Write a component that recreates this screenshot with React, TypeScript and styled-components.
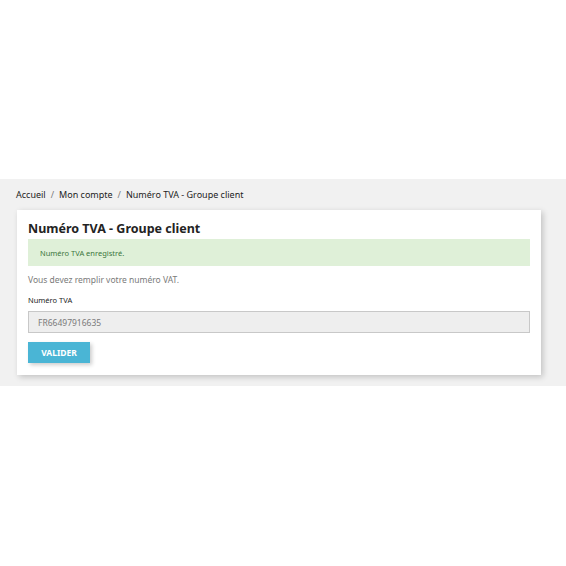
import styled, { createGlobalStyle } from "styled-components";

const GlobalStyle = createGlobalStyle`
  body {
    margin: 0;
    background: #fff;
    font-family: "Noto Sans", "Open Sans", sans-serif;
  }
`;

const HeaderSpace = styled.div`
  height: 179px;
`;

const Wrapper = styled.section`
  background: #f1f1f1;
  padding: 0 25px 11px 17px;
`;

const Breadcrumb = styled.nav`
  display: flex;
  align-items: center;
  height: 31px;
  margin-left: -1px;
  font-size: 9px;
  color: #232323;
`;

const Crumb = styled.span`
  color: #232323;
`;

const Sep = styled.span`
  color: #7a7a7a;
  margin: 0 5px;
`;

const Card = styled.div`
  background: #fff;
  box-shadow: 2px 2px 6px 0 rgba(0, 0, 0, 0.2);
  padding: 10px 11px 12px 11px;
`;

const Title = styled.h1`
  margin: 0;
  font-size: 12.5px;
  font-weight: 700;
  color: #232323;
  line-height: 18px;
`;

const Alert = styled.div`
  margin-top: 1px;
  height: 27px;
  display: flex;
  align-items: center;
  padding: 0 12px;
  background: #dff0d8;
  color: #3c763d;
  font-size: 7.5px;
`;

const Hint = styled.p`
  margin: 7px 0 0;
  font-size: 8.5px;
  line-height: 14px;
  color: #7a7a7a;
`;

const Label = styled.label`
  display: block;
  margin-top: 6px;
  font-size: 7.5px;
  line-height: 14px;
  color: #232323;
`;

const Input = styled.div`
  margin-top: 4px;
  height: 22px;
  box-sizing: border-box;
  border: 1px solid #c8c8c8;
  background: #eee;
  color: #7a7a7a;
  font-size: 8.5px;
  display: flex;
  align-items: center;
  padding: 0 9px;
`;

const Button = styled.button`
  margin-top: 9px;
  display: block;
  width: 62px;
  height: 21px;
  border: none;
  background: #4ab5d5;
  color: #fff;
  font-family: inherit;
  font-size: 8.5px;
  font-weight: 700;
  text-transform: uppercase;
  box-shadow: 2px 2px 4px 0 rgba(0, 0, 0, 0.2);
  padding: 0;
`;

export default function App() {
  return (
    <>
      <GlobalStyle />
      <HeaderSpace />
      <Wrapper>
        <Breadcrumb>
          <Crumb>Accueil</Crumb>
          <Sep>/</Sep>
          <Crumb>Mon compte</Crumb>
          <Sep>/</Sep>
          <Crumb>Numéro TVA - Groupe client</Crumb>
        </Breadcrumb>
        <Card>
          <Title>Numéro TVA - Groupe client</Title>
          <Alert>Numéro TVA enregistré.</Alert>
          <Hint>Vous devez remplir votre numéro VAT.</Hint>
          <Label>Numéro TVA</Label>
          <Input>FR66497916635</Input>
          <Button>Valider</Button>
        </Card>
      </Wrapper>
    </>
  );
}
